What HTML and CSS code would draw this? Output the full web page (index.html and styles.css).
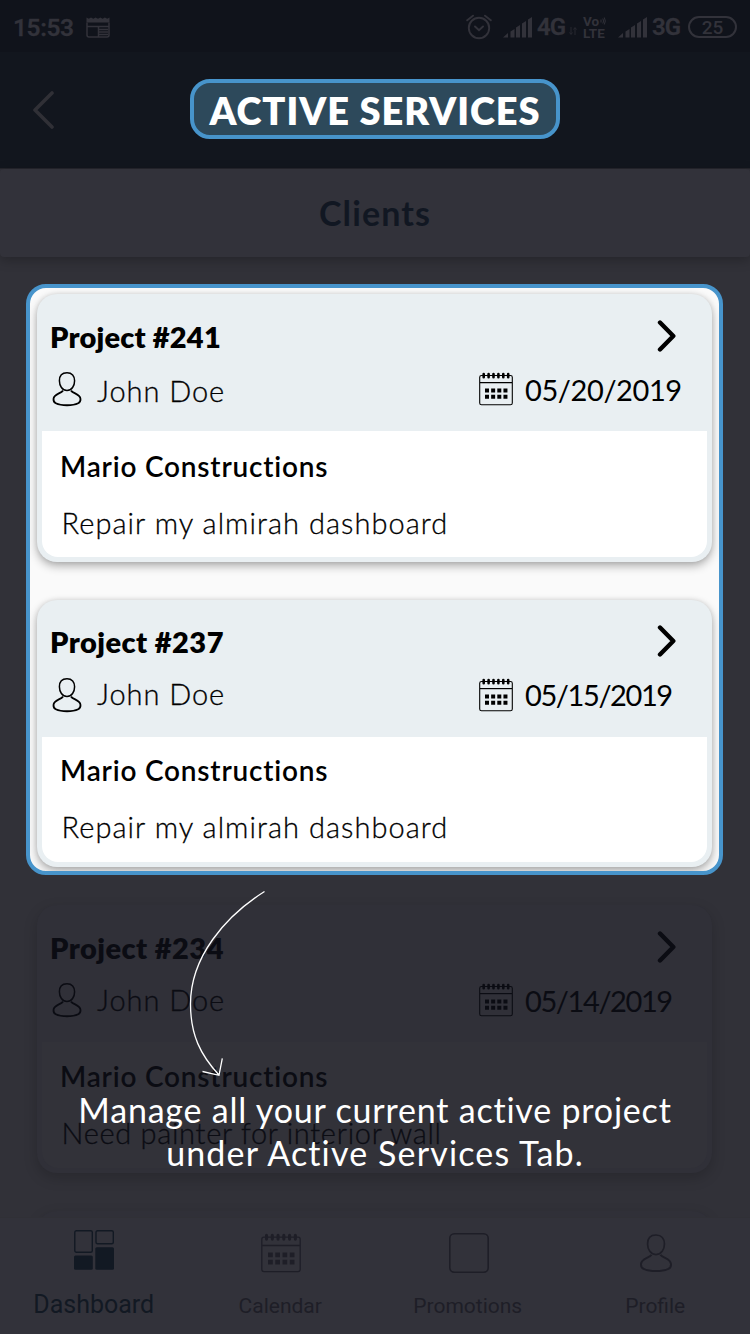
FILE: index.html
```html
<!DOCTYPE html>
<html lang="en">
<head>
<meta charset="utf-8">
<title>Active Services</title>
<link rel="stylesheet" href="styles.css">
</head>
<body>
<svg class="defs" width="0" height="0">
  <symbol id="person" viewBox="0 0 30 36"><g fill="none" stroke="currentColor" stroke-width="1.5" stroke-linejoin="round"><path d="M15 1.8C10 1.8 7.4 5 7.4 9.8c0 5 2.8 9.6 7.6 9.6s7.6-4.600 7.600-9.600C22.600 5 20 1.800 15 1.800z"/><path stroke-width="1.800" d="M11 19.600C8.500 22.800 1.800 22.700 1.500 28c-.1 2.600.3 3.300 2.300 4.200 5.500 2.700 16.900 2.700 22.400 0 2-.9 2.400-1.600 2.300-4.200-.3-5.300-7-5.200-9.500-8.400"/></g></symbol>
  <symbol id="calendar" viewBox="0 0 34 34"><rect x=".7" y="3.500" width="32.600" height="29.300" rx="1.800" fill="none" stroke="currentColor" stroke-width="1.100"/><path d="M1 10.600H33" stroke="currentColor" stroke-width="1.200"/><path d="M4.700 2v3.200M9.600 2v3.200M14.500 2v3.200M19.400 2v3.200M24.300 2v3.200M29.200 2v3.200" stroke="currentColor" stroke-width="2.600" stroke-linecap="round"/><path d="M6 18.600h22.600M6 24.700h22.600" stroke="currentColor" stroke-width="4" stroke-dasharray="4 2.150"/></symbol>
  <symbol id="chevron" viewBox="0 0 20 32"><path d="M3 2.500 16.300 16 3 29.500" fill="none" stroke="currentColor" stroke-width="4.400" stroke-linecap="round" stroke-linejoin="round"/></symbol>
  <symbol id="signal" viewBox="0 0 29 21"><path d="M0 20.500 5 16v4.500zM7.500 14.500l4-2.500v8.500h-4zM13 10.500 17 8v12.500h-4zM19 6.500 23 4v16.500h-4zM25 2.500l4-2.500v20.500h-4z" fill="currentColor"/></symbol>
</svg>
<main class="phone">
  <header class="status">
    <span class="clock">15:53</span>
    <svg class="news" viewBox="0 0 24 21"><path d="M1 5.500V18q0 2 2 2h18q2 0 2-2V5.500M1 9.500h22M12.500 10v10" fill="none" stroke="currentColor" stroke-width="1.500"/><path d="M.5 5.500V.6l2.300 1.200L5 .6l2.300 1.200L9.600.6l2.400 1.200L14.300.6l2.300 1.200L18.900.6l2.300 1.200L23.500.6v4.900z" fill="currentColor"/><path d="M12.500 12.500H22M12.500 15H22M12.500 17.500H22" stroke="currentColor" stroke-width="1.300"/></svg>
    <div class="indicators">
      <svg class="alarm" viewBox="0 0 26 26"><g fill="none" stroke="currentColor" stroke-width="1.900" stroke-linecap="round"><circle cx="13" cy="14" r="10.200"/><path d="m9 12.500 4 3.700 4-3.700M1.200 6.300 7 1.700M24.800 6.300 19 1.700"/></g></svg>
      <svg class="signal"><use href="#signal"/></svg>
      <span class="net net-first">4G</span>
      <svg class="updown" viewBox="0 0 8 10"><path d="M2 1v7M.5 6.500 2 8.500l1.500-2M6 9V2M4.500 3.500 6 1.500l1.500 2" fill="none" stroke="currentColor"/></svg>
      <span class="volte"><span class="vo">Vo<svg class="waves" viewBox="0 0 6 8"><path d="M1 2.500v3M2.800 1.500q1.500 2.500 0 5M4.300.5q2 3.500 0 7" fill="none" stroke="currentColor"/></svg></span><span>LTE</span></span>
      <svg class="signal"><use href="#signal"/></svg>
      <span class="net">3G</span>
      <span class="battery">25</span>
    </div>
  </header>
  <nav class="titlebar">
    <svg class="back" viewBox="0 0 22 38"><path d="M20 2 3 19l17 17" fill="none" stroke="currentColor" stroke-width="3.600" stroke-linecap="round" stroke-linejoin="round"/></svg>
    <h1 class="title"><span>ACTIVE SERVICES</span></h1>
  </nav>
  <div class="tab"><span>Clients</span></div>
  <section class="list">
    <div class="spotlight">
      <article class="card">
        <div class="card-head">
          <div class="row"><h2 class="narrow">Project #241</h2><svg class="chevron"><use href="#chevron"/></svg></div>
          <div class="row meta"><svg class="person"><use href="#person"/></svg><span class="name">John Doe</span><svg class="cal"><use href="#calendar"/></svg><span class="date">05/20/2019</span></div>
        </div>
        <div class="card-body"><h3>Mario Constructions</h3><p>Repair my almirah dashboard</p></div>
      </article>
      <article class="card">
        <div class="card-head">
          <div class="row"><h2>Project #237</h2><svg class="chevron"><use href="#chevron"/></svg></div>
          <div class="row meta"><svg class="person"><use href="#person"/></svg><span class="name raised">John Doe</span><svg class="cal"><use href="#calendar"/></svg><span class="date tight">05/15/2019</span></div>
        </div>
        <div class="card-body second"><h3>Mario Constructions</h3><p>Repair my almirah dashboard</p></div>
      </article>
    </div>
    <article class="card dim">
      <div class="card-head">
        <div class="row"><h2>Project #234</h2><svg class="chevron"><use href="#chevron"/></svg></div>
        <div class="row meta"><svg class="person"><use href="#person"/></svg><span class="name raised-half">John Doe</span><svg class="cal"><use href="#calendar"/></svg><span class="date tight">05/14/2019</span></div>
      </div>
      <div class="card-body third"><h3>Mario Constructions</h3><p class="need">Need painter for interior wall</p></div>
    </article>
    <article class="card dim next"></article>
  </section>
  <footer class="tabs">
    <div class="item active"><svg class="ico" viewBox="0 0 40 40"><g fill="none" stroke="currentColor" stroke-width="1.400"><rect x=".8" y=".8" width="17.500" height="21.500" rx="1.500"/><rect x="22" y=".8" width="17.300" height="13" rx="1.500"/></g><rect y="25.500" width="18.800" height="14.300" rx="1.500" fill="currentColor"/><rect x="21.300" y="17.200" width="18.700" height="22.600" rx="1.500" fill="currentColor"/></svg><span>Dashboard</span></div>
    <div class="item"><svg class="ico"><use href="#calendar"/></svg><span>Calendar</span></div>
    <div class="item"><svg class="ico" viewBox="0 0 40 40"><rect x=".8" y=".8" width="38.400" height="38.400" rx="4.500" fill="none" stroke="currentColor" stroke-width="1.600"/></svg><span>Promotions</span></div>
    <div class="item"><svg class="ico"><use href="#person"/></svg><span>Profile</span></div>
  </footer>
  <div class="coach">
    <svg class="arrow" viewBox="0 0 80 190"><path d="M77.500 2.500C38 27.500 3.500 68 3.500 115c0 31 10 51 28.500 71M15.500 182.500l16.500 3.800 3.300-17" fill="none" stroke="#fff" stroke-width="1.300"/></svg>
    <p><span class="line-one">Manage all your current active project</span><br><span class="line-two">under Active Services Tab.</span></p>
  </div>
</main>
</body>
</html>
```
FILE: styles.css
```css
* { box-sizing: border-box; }
body { margin: 0; }
h1, h2, h3, p { margin: 0; }
svg { display: block; flex: none; }
.defs { position: absolute; }
.phone {
  position: relative;
  width: 750px;
  height: 1334px;
  display: flex;
  flex-direction: column;
  overflow: hidden;
  background: #313138;
  font-family: Lato, "Open Sans", sans-serif;
  font-variant-ligatures: none;
  color: #000;
  white-space: nowrap;
}
.status {
  height: 52px;
  padding: 2px 13px 0 13px;
  display: flex;
  align-items: center;
  background: #10131b;
  color: #32323a;
  font-family: Roboto, sans-serif;
}
.clock { font-size: 24.500px; font-weight: 600; -webkit-text-stroke: .3px; letter-spacing: -.4px; }
.news { width: 24px; height: 21px; margin-left: 12px; }
.indicators { margin-left: auto; display: flex; align-items: center; }
.alarm { width: 26px; height: 26px; margin-right: 11px; }
.signal { width: 29px; height: 21px; }
.net { font-size: 24px; font-weight: 600; margin-left: 5px; -webkit-text-stroke: .3px; width: 36px; letter-spacing: -1px; }
.net-first { width: 32px; }
.updown { width: 8px; height: 10px; margin: 8px 6px 0 0; opacity: .7; }
.volte { display: flex; flex-direction: column; font-size: 13.500px; line-height: 12px; font-weight: 700; width: 35px; }
.vo { display: flex; align-items: center; }
.waves { width: 6px; height: 8px; margin-left: 1px; }
.battery {
  width: 49px; height: 22px; border: 2px solid; border-radius: 11px;
  font-size: 19px; font-weight: 500; line-height: 19px; text-align: center;
}
.titlebar { height: 117px; display: flex; padding: 27px 0 0 32px; background: #12161e; border-bottom: 1px solid #25252c; }
.back { width: 22px; height: 38px; margin-top: 12px; color: #303036; }
.title {
  width: 370px; height: 60px; margin-left: 136px;
  border: 4px solid #4794cb; border-radius: 20px; background: #2d495b;
  color: #fff; font-size: 38px; line-height: 54px; font-weight: 800; text-align: center; letter-spacing: .95px;
}
.tab {
  height: 88px; border-radius: 4px; background: #32323a; box-shadow: 0 3px 12px rgba(0,0,0,.25);
  color: #111722; font-size: 34px; line-height: 88px; font-weight: 700; text-align: center; letter-spacing: 1.1px;
}
.list { flex: 1; padding: 27px 27px 0 26px; min-height: 0; }
.spotlight {
  height: 591px; padding: 6px 7px 0;
  border: 4px solid #4794cb; border-radius: 20px; background: #fafafa;
  overflow: hidden;
}
.card {
  width: 675px; height: 267.500px; margin-bottom: 38px; padding: 0 5px 5px;
  display: flex; flex-direction: column;
  border-radius: 20px; background: #e9eff2;
  box-shadow: 0 4px 10px rgba(0,0,0,.3), 0 0 5px rgba(0,0,0,.1);
}
.card-head { height: 137px; padding: 18.500px 0 0 8px; }
.row { display: flex; align-items: center; height: 48px; }
.row h2 { font-size: 29px; font-weight: 800; line-height: 46px; letter-spacing: .45px; }
.row .narrow { letter-spacing: .2px; }
.row .chevron { width: 20px; height: 32px; margin: -1.500px 30px 0 auto; }
.meta { height: 57px; }
.person { width: 30px; height: 36px; margin-left: 2px; }
.name { font-size: 29px; font-weight: 300; width: 382px; margin-left: 15px; line-height: 46px; -webkit-text-stroke: .3px; margin-top: 3px; letter-spacing: .95px; }
.raised { margin-top: -2px; }
.raised-half { margin-top: 0; }
.cal { width: 34px; height: 34px; }
.date { font-size: 29px; margin-left: 12px; letter-spacing: -.4px; }
.tight { letter-spacing: -1.400px; }
.card-body { flex: 1; background: #fff; border-radius: 0 0 16px 16px; padding: 12px 0 0 18px; }
.second { padding-top: 10.500px; }
.third { padding-top: 10.500px; }
.card-body h3 { font-size: 28px; font-weight: 600; line-height: 46px; letter-spacing: .8px; }
.card-body p { font-size: 29px; font-weight: 300; line-height: 46px; margin: 11px 0 0 1.500px; -webkit-text-stroke: .3px; letter-spacing: 1.050px; }
.card-body .need { letter-spacing: .7px; }
.dim { margin: 30px 0 0 11px; background: #303038; color: #0b0c13; box-shadow: 0 5px 14px rgba(0,0,0,.18); }
.dim .card-body { background: #323239; }
.next { margin-top: 38px; }
.tabs {
  height: 117px; display: grid; grid-template-columns: repeat(4, 187.500px);
  position: relative; background: #32323a; color: #1e1e27;
  font: 21px Roboto, sans-serif; border-top: 1px solid #303036;
}
.item { display: flex; flex-direction: column; align-items: center; padding-top: 15px; }
.item .ico { width: 40px; height: 40px; }
.item span { margin: 21px 2px 0 0; line-height: 24px; }
.active { color: #121923; font-size: 25px; padding-top: 12px; }
.item.active span { margin: 23px 0 0; }
.coach { position: absolute; left: 0; top: 889px; width: 750px; color: #fff; }
.arrow { width: 80px; height: 190px; margin-left: 187px; }
.coach p { margin-top: 9px; font-size: 34px; line-height: 43px; text-align: center; }
.line-one { letter-spacing: .8px; }
.line-two { letter-spacing: 1.150px; }
```
